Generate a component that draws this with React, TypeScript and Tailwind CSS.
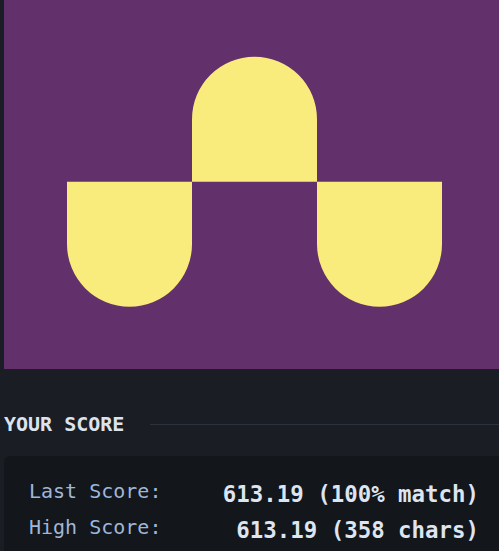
export default function App() {
  const mono = { fontFamily: '"DejaVu Sans Mono", "Liberation Mono", monospace' };
  return (
    <div className="w-[499px] h-[551px] overflow-hidden bg-[#1a1d24]" style={mono}>
      <div className="w-[500px] ml-[4px] flex flex-col">
        <svg width="500" height="369" viewBox="0 0 500 369" className="block">
          <rect x="0" y="0" width="500" height="369" fill="#62316b" />
          <path d="M63 181.7 H188 V244.2 A62.5 62.5 0 0 1 63 244.2 Z" fill="#f9eb7c" />
          <path d="M188 181.7 V119.2 A62.5 62.5 0 0 1 313 119.2 V181.7 Z" fill="#f9eb7c" />
          <path d="M313 181.7 H438 V244.2 A62.5 62.5 0 0 1 313 244.2 Z" fill="#f9eb7c" />
        </svg>
        <div className="mt-[41px] flex items-center gap-[26px] h-[28px]">
          <span className="text-[20px] leading-[28px] font-bold text-[#dde3ee] whitespace-nowrap">YOUR SCORE</span>
          <div className="flex-1 h-px bg-[#2b323b]" />
        </div>
        <div className="mt-[18px] rounded-[6px] bg-[#13161b] pt-[17px] pb-[20px] px-[25px] flex flex-col">
          <div className="flex justify-between items-start h-9">
            <span className="text-[20px] leading-9 text-[#9fb6da]">Last Score:</span>
            <span className="text-[22.4px] leading-9 pt-[3px] font-bold text-[#dde4f2]">613.19 (100% match)</span>
          </div>
          <div className="flex justify-between items-start h-9">
            <span className="text-[20px] leading-9 text-[#9fb6da]">High Score:</span>
            <span className="text-[22.4px] leading-9 pt-[3px] font-bold text-[#dde4f2]">613.19 (358 chars)</span>
          </div>
        </div>
      </div>
    </div>
  );
}
